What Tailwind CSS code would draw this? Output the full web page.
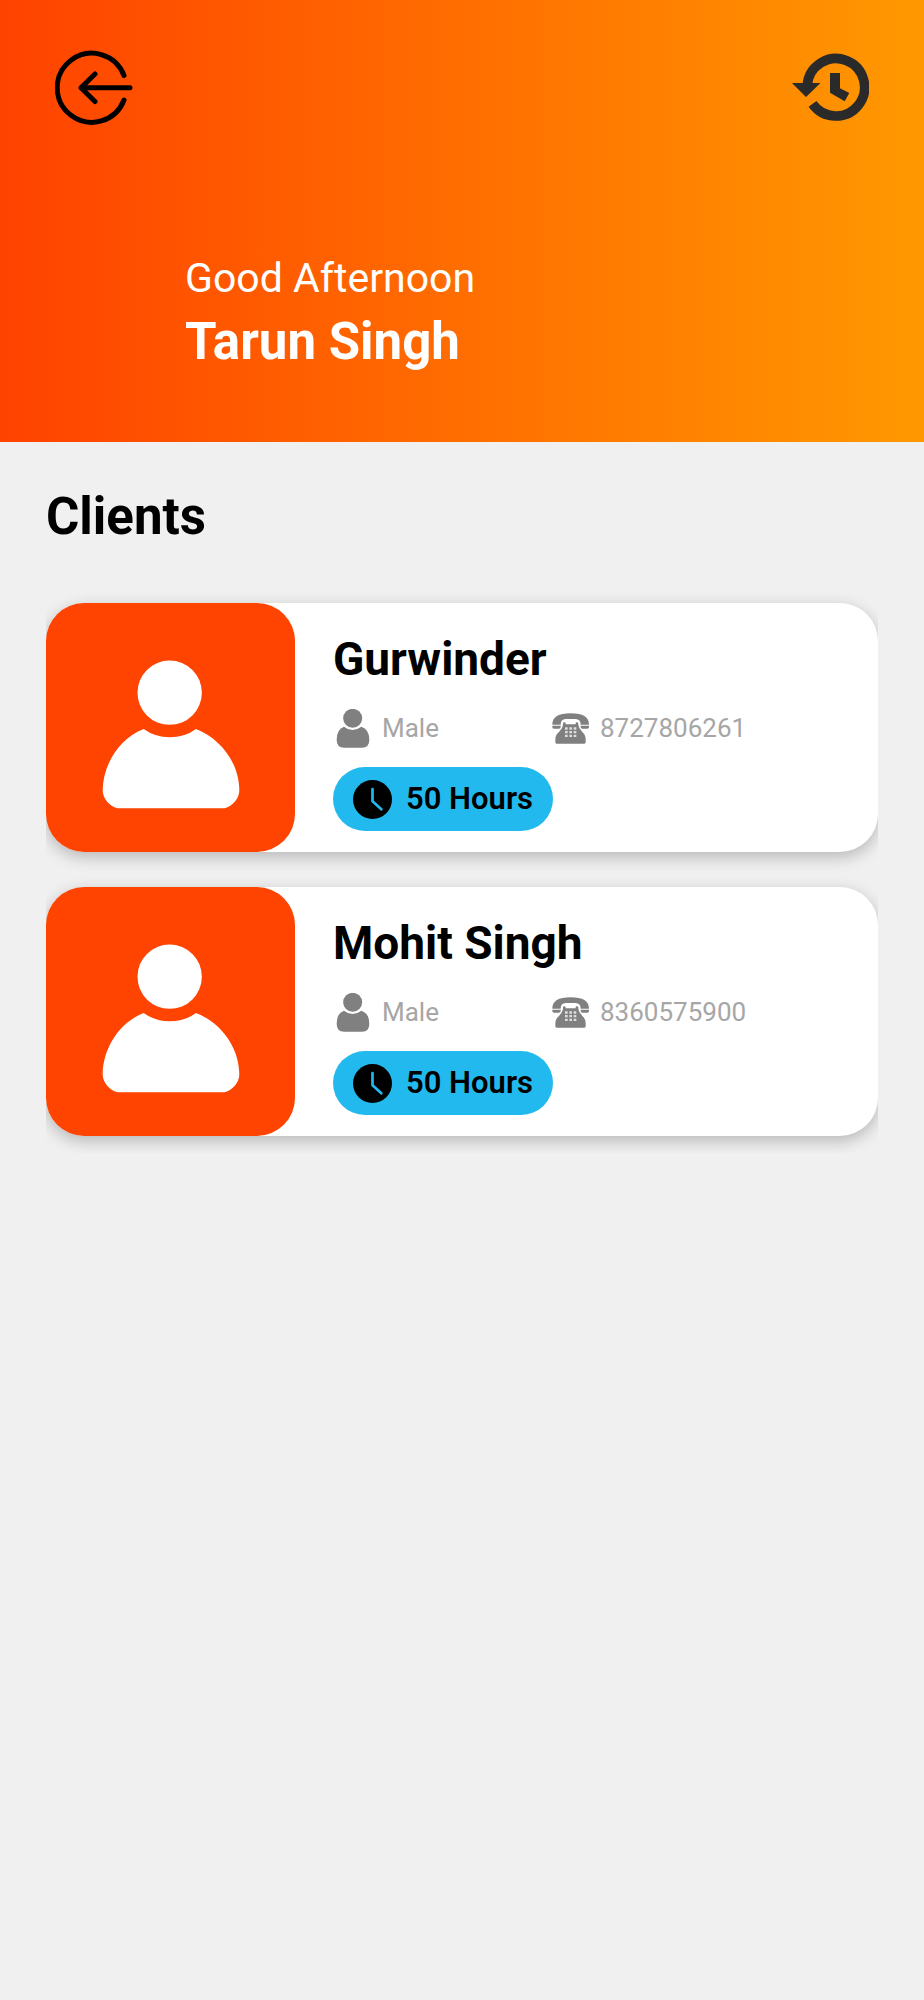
<!DOCTYPE html>
<html lang="en">
<head>
<meta charset="utf-8">
<meta name="viewport" content="width=device-width, initial-scale=1">
<title>Clients</title>
<script src="https://cdn.jsdelivr.net/npm/@tailwindcss/browser@4"></script>
</head>
<body class="min-h-screen bg-[#f0f0f0] font-['Roboto',sans-serif] text-black">
<svg class="hidden" aria-hidden="true">
  <symbol id="avatar" viewBox="48 38 747 747">
    <circle cx="419" cy="307" r="96.500"/>
    <path d="M341 416Q376 441 419 441Q464 441 498 416C575 446 628 522 628 600C628 625 608 648 584 654H262C238 648 218 625 218 600C219 520 270 443 341 416Z"/>
  </symbol>
  <symbol id="person" viewBox="40 264 117 117">
    <circle cx="99" cy="292" r="28.500"/>
    <path d="M73 317Q98 337 125 317Q149 325 149 356Q149 380 127 380H73Q51 380 51 356Q51 325 73 317Z"/>
  </symbol>
  <symbol id="phone" viewBox="34 54 117 117">
    <path d="M38 101C38 78 56 67 93 67S148 78 148 101H123C123 90 118 85 108 84H78C68 85 63 90 63 101Z"/>
    <path d="M38 104H63V108Q63 113 58 113H43Q38 113 38 108ZM123 104H148V108Q148 113 143 113H128Q123 113 123 108Z"/>
    <path d="M70 102V97Q70 94 74 94T78 97V100H108V97Q108 94 112 94T116 97V102Q117 112 128 123Q138 132 138 145V154Q138 158 134 158H51Q47 158 47 154V145Q47 132 58 123Q69 112 70 102Z"/>
    <path fill="#ddd" d="M76 109h8v7h-8zM89 109h8v7h-8zM102 109h8v7h-8zM76 120h8v7h-8zM89 120h8v7h-8zM102 120h8v7h-8zM76 131h8v7h-8zM89 131h8v7h-8zM102 131h8v7h-8z"/>
  </symbol>
  <symbol id="clock" viewBox="0 0 117 117">
    <circle cx="58.500" cy="58.500" r="58.500" fill="#000"/>
    <path d="M58.500 27V64L85 88" fill="none" stroke="#22baee" stroke-width="8" stroke-linecap="round" stroke-linejoin="round"/>
  </symbol>
</svg>

<header class="bg-linear-to-r/srgb from-[#ff4200] to-[#ff9900] px-[55px] pt-12 pb-[68px]">
  <nav class="flex items-center justify-between">
    <button type="button" aria-label="Go back">
      <svg class="h-20 w-20" viewBox="0 0 80 80" fill="none" stroke="#000" stroke-width="5" stroke-linecap="round" stroke-linejoin="round">
        <path d="M69 27.500A34.500 34.500 0 1 0 69 52M75 39.700H26M40 26L26 39.700L40 53.500"/>
      </svg>
    </button>
    <button type="button" aria-label="History">
      <svg class="h-20 w-20" viewBox="0 0 80 80">
        <path d="M18.300 37A28.700 28.700 0 1 1 23.500 55.900" fill="none" stroke="#2a2a2a" stroke-width="9.600"/>
        <path d="M3 35H31.500L17 49ZM41 25H51V40.300L60.300 45L55.700 53.300L41 44.700Z" fill="#2a2a2a"/>
      </svg>
    </button>
  </nav>
  <div class="px-[130px] pt-[125px]">
    <p class="text-[41px] leading-[50px] text-white">Good Afternoon</p>
    <h1 class="pt-[7px] text-[51px] leading-[64px] font-bold text-white">Tarun Singh</h1>
  </div>
</header>

<main class="px-[46px] pt-[45px]">
  <h2 class="text-[51px] leading-[60px] font-bold">Clients</h2>
  <ul class="mt-9 flex flex-col gap-[35px] overflow-hidden pt-5 pb-[17px]">
    <li class="flex rounded-[38px] bg-white shadow-[0_5px_16px_rgba(0,0,0,0.24)]">
      <div class="size-[249px] shrink-0 rounded-[38px] bg-[#ff4300]">
        <svg class="size-full" fill="#fff"><use href="#avatar"/></svg>
      </div>
      <div class="flex-1 pt-7 pl-[38px]">
        <h3 class="text-[46px] leading-[56px] font-bold">Gurwinder</h3>
        <div class="flex pt-[21px] text-[26px] leading-10 text-[#a6a6a6]">
          <p class="flex w-[218px] items-center gap-2.5"><svg class="size-[39px]" fill="#808080"><use href="#person"/></svg>Male</p>
          <p class="flex items-center gap-2.5"><svg class="size-[39px]" fill="#808080"><use href="#phone"/></svg>8727806261</p>
        </div>
        <p class="mt-[19px] inline-flex h-16 items-center gap-3.5 rounded-full bg-[#22baee] px-5 text-[31px] font-semibold"><svg class="size-[39px]"><use href="#clock"/></svg>50 Hours</p>
      </div>
    </li>
    <li class="flex rounded-[38px] bg-white shadow-[0_5px_16px_rgba(0,0,0,0.24)]">
      <div class="size-[249px] shrink-0 rounded-[38px] bg-[#ff4300]">
        <svg class="size-full" fill="#fff"><use href="#avatar"/></svg>
      </div>
      <div class="flex-1 pt-7 pl-[38px]">
        <h3 class="text-[46px] leading-[56px] font-bold">Mohit Singh</h3>
        <div class="flex pt-[21px] text-[26px] leading-10 text-[#a6a6a6]">
          <p class="flex w-[218px] items-center gap-2.5"><svg class="size-[39px]" fill="#808080"><use href="#person"/></svg>Male</p>
          <p class="flex items-center gap-2.5"><svg class="size-[39px]" fill="#808080"><use href="#phone"/></svg>8360575900</p>
        </div>
        <p class="mt-[19px] inline-flex h-16 items-center gap-3.5 rounded-full bg-[#22baee] px-5 text-[31px] font-semibold"><svg class="size-[39px]"><use href="#clock"/></svg>50 Hours</p>
      </div>
    </li>
  </ul>
</main>
</body>
</html>
